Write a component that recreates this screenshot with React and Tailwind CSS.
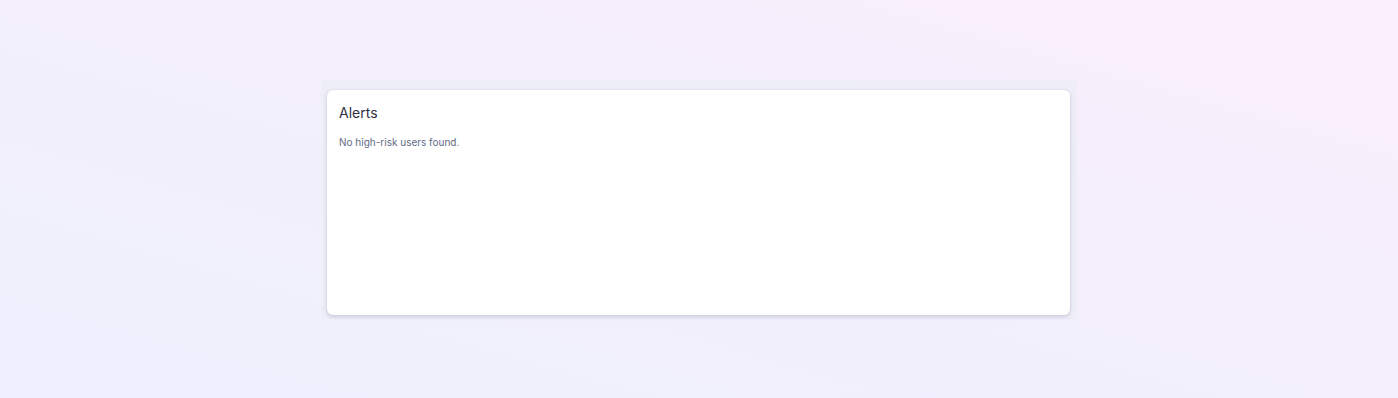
import React from 'react';

const Alerts = ({ users = [] }) => (
  <div className="bg-white rounded-md shadow-[0_2px_4px_rgba(60,64,110,0.18),0_0_2px_rgba(60,64,110,0.12)] h-[225px] px-3 pt-3">
    <h2 className="text-[14px] leading-[22px] font-normal text-[#2f3142]">Alerts</h2>
    {users.length === 0 ? (
      <p className="mt-[10px] text-[10px] leading-4 text-[#626b85]">No high-risk users found.</p>
    ) : null}
  </div>
);

export default function App() {
  return (
    <div
      className="w-full h-[398px] bg-gradient-to-tr from-[#eef0fd] via-[#f3effd] to-[#fbeefc] flex justify-center pt-[80px]"
      style={{ fontFamily: 'Inter, "Noto Sans", sans-serif' }}
    >
      <div className="w-[756px] h-[239px] bg-[#eceef5]/80 pl-[6px] pr-[7px] pt-[10px] pb-[4px]">
        <Alerts />
      </div>
    </div>
  );
}
